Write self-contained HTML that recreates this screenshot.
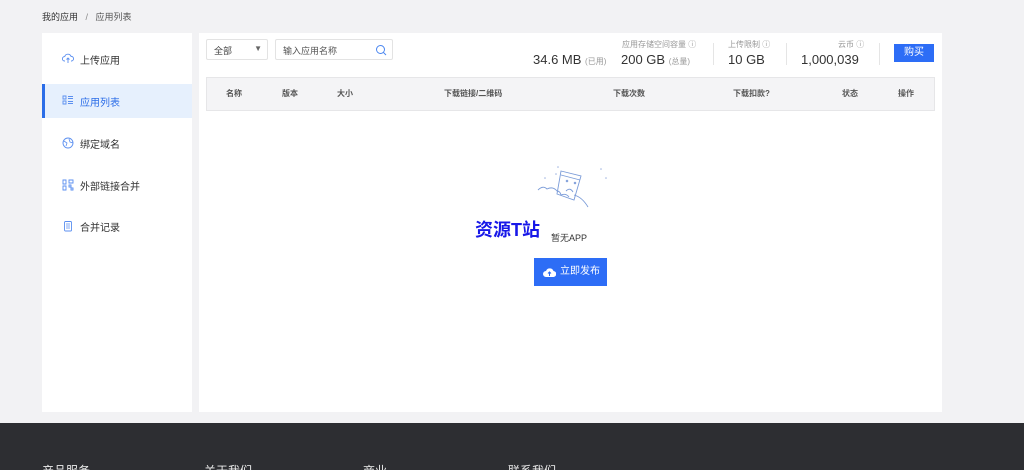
<!DOCTYPE html>
<html><head><meta charset="utf-8"><style>
*{margin:0;padding:0;box-sizing:border-box}
html,body{width:1024px;height:470px;overflow:hidden}
body{background:#f2f2f4;font-family:"Liberation Sans","Noto Sans CJK SC",sans-serif;color:#333;position:relative}
.abs{position:absolute}
.side{left:42px;top:33px;width:150px;height:379px;background:#fff}
.item{position:absolute;left:0;width:150px;height:34px;font-size:10px;color:#333;display:flex;align-items:center;padding-left:38px}
.item svg{position:absolute;left:20px;top:11px}
.main{left:199px;top:33px;width:743px;height:379px;background:#fff}
.th{position:absolute;top:88px;font-size:8px;color:#555;font-weight:bold}
.foot{left:0;top:423px;width:1024px;height:47px;background:#2d2e32}
.ft{position:absolute;top:462px;color:#eee;font-size:12px}
</style></head><body>
<div class="abs" style="left:42px;top:10px;font-size:9px;color:#333">我的应用 <span style="color:#888;margin:0 5px">/</span> <span style="color:#555">应用列表</span></div>
<div class="abs side">
 <div class="item" style="top:9px"><svg width="12" height="11" viewBox="0 0 12 11"><path d="M3 8H2.5A2.2 2.2 0 0 1 2.7 3.6 3.3 3.3 0 0 1 9 3.4 2.3 2.3 0 0 1 9.5 8H9M6 5v5M4.5 6.5L6 5l1.5 1.5" fill="none" stroke="#5b8ff0" stroke-width=".9"/></svg>上传应用</div>
 <div class="item" style="top:51px;background:#e6f0fd;color:#2b6de8"><div style="position:absolute;left:0;top:0;width:3px;height:34px;background:#2b6de8"></div><svg width="12" height="11" viewBox="0 0 12 11"><path d="M1 1h3v3H1zM1 6h3v3H1zM6 1.5h5M6 3.5h5M6 6.5h5M6 8.5h5" fill="none" stroke="#5b8ff0" stroke-width=".9"/></svg>应用列表</div>
 <div class="item" style="top:93px"><svg width="12" height="12" viewBox="0 0 12 12"><circle cx="6" cy="6" r="5" fill="none" stroke="#5b8ff0" stroke-width=".9"/><path d="M2 4l3 2-1 3M7 2l1 3 3 1" fill="none" stroke="#5b8ff0" stroke-width=".8"/></svg>绑定域名</div>
 <div class="item" style="top:135px"><svg width="12" height="12" viewBox="0 0 12 12"><path d="M1 1h3v4H1zM7 1h4v3H7zM1 7h3v4H1zM7 6h2v2H7zM9 9h2v2H9z" fill="none" stroke="#5b8ff0" stroke-width=".9"/></svg>外部链接合并</div>
 <div class="item" style="top:176px"><svg width="12" height="12" viewBox="0 0 12 12"><rect x="2.5" y="1.5" width="7" height="9.5" rx="1" fill="none" stroke="#5b8ff0" stroke-width=".9"/><path d="M4 4h4M4 6h4M4 8h4" stroke="#5b8ff0" stroke-width=".8"/></svg>合并记录</div>
</div>
<div class="abs main"></div>
<div class="abs" style="left:206px;top:39px;width:62px;height:21px;border:1px solid #e3e3e3;border-radius:2px;font-size:9px;color:#444;padding:4px 7px">全部<span style="position:absolute;right:5px;top:4px;font-size:8px;color:#666">▼</span></div>
<div class="abs" style="left:275px;top:39px;width:118px;height:21px;border:1px solid #e3e3e3;border-radius:2px;font-size:9px;color:#555;padding:4px 7px">输入应用名称<svg style="position:absolute;right:5px;top:4px" width="12" height="12" viewBox="0 0 12 12"><circle cx="5.5" cy="5.5" r="4" fill="none" stroke="#4a86f0" stroke-width="1"/><path d="M8.5 8.5L11 11" stroke="#4a86f0"/></svg></div>
<div class="abs" style="left:622px;top:39px;font-size:8px;color:#999">应用存储空间容量 ⓘ</div>
<div class="abs" style="left:533px;top:52px;font-size:13px;color:#333">34.6 MB <span style="font-size:8px;color:#999">(已用)</span></div>
<div class="abs" style="left:621px;top:52px;font-size:13px;color:#333">200 GB <span style="font-size:8px;color:#999">(总量)</span></div>
<div class="abs" style="left:713px;top:43px;width:1px;height:22px;background:#e5e5e5"></div>
<div class="abs" style="left:728px;top:39px;font-size:8px;color:#999">上传限制 ⓘ</div>
<div class="abs" style="left:728px;top:52px;font-size:13px;color:#333">10 GB</div>
<div class="abs" style="left:786px;top:43px;width:1px;height:22px;background:#e5e5e5"></div>
<div class="abs" style="left:838px;top:39px;font-size:8px;color:#999">云币 ⓘ</div>
<div class="abs" style="left:801px;top:52px;font-size:13px;color:#333">1,000,039</div>
<div class="abs" style="left:879px;top:43px;width:1px;height:22px;background:#e5e5e5"></div>
<div class="abs" style="left:894px;top:44px;width:40px;height:18px;background:#2d6df6;color:#fff;font-size:10px;text-align:center;line-height:18px">购买</div>
<div class="abs" style="left:206px;top:77px;width:729px;height:34px;background:#f4f4f6;border:1px solid #e6e6e8"></div>
<div class="th" style="left:226px">名称</div><div class="th" style="left:282px">版本</div><div class="th" style="left:337px">大小</div>
<div class="th" style="left:444px">下载链接/二维码</div><div class="th" style="left:613px">下载次数</div><div class="th" style="left:733px">下载扣款?</div>
<div class="th" style="left:842px">状态</div><div class="th" style="left:898px">操作</div>
<svg class="abs" style="left:530px;top:165px" width="80" height="50" viewBox="0 0 80 50"><g fill="none" stroke="#7a9bd8" stroke-width=".9"><path d="M31 6l20 5-7 24-17-6z"/><path d="M31 10l19 5"/><circle cx="37" cy="16" r=".8"/><circle cx="45" cy="18" r=".8"/><path d="M36 26q4-4 7 1"/><path d="M8 25q5-5 9-1q6-3 10 2q3 0 4 4q5-2 8 2 M44 30q8 2 14 12"/></g><g fill="#9fb4e0"><circle cx="28" cy="2" r=".8"/><circle cx="26" cy="9" r=".8"/><circle cx="15" cy="13" r=".8"/><circle cx="71" cy="4" r=".8"/><circle cx="76" cy="13" r=".8"/></g></svg>
<div class="abs" style="left:475px;top:216px;font-size:18px;font-weight:bold;color:#1818e8">资源T站</div>
<div class="abs" style="left:551px;top:231px;font-size:9px;color:#333">暂无APP</div>
<div class="abs" style="left:534px;top:258px;width:73px;height:28px;background:#2d6df6;color:#fff;font-size:10px;line-height:28px;padding-left:26px"><svg style="position:absolute;left:9px;top:9px" width="13" height="10" viewBox="0 0 13 10"><path d="M3 10A3 3 0 0 1 3 4 4 4 0 0 1 10.5 4 3 3 0 0 1 10 10z" fill="#fff"/><path d="M6.5 9V5M5 6.5l1.5-1.5 1.5 1.5" stroke="#2d6df6" fill="none"/></svg>立即发布</div>
<div class="abs foot"></div>
<div class="ft" style="left:42px">产品服务</div><div class="ft" style="left:204px">关于我们</div><div class="ft" style="left:363px">商业</div><div class="ft" style="left:508px">联系我们</div>
</body></html>
